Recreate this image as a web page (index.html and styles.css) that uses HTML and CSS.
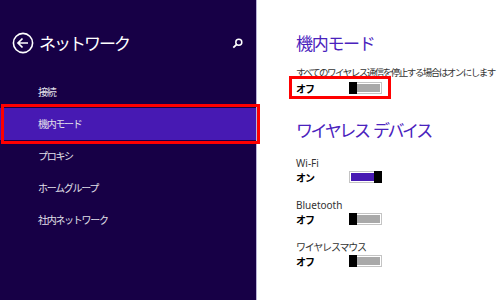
FILE: index.html
```html
<!DOCTYPE html>
<html lang="ja">
  <head>
    <meta charset="UTF-8" />
    <meta name="viewport" content="width=device-width, initial-scale=1.0" />
    <title>ネットワーク</title>
    <link rel="stylesheet" href="styles.css">
  </head>
  <body>
    <div class="screen">
      <aside class="nav">
        <header class="nav-head">
          <svg class="back" width="22" height="22" viewBox="0 0 22 22">
            <circle cx="11" cy="11" r="9.6" fill="none" stroke="#fff" stroke-width="1.6" />
            <path d="M6 11h10M10.5 6.5L6 11l4.5 4.5" fill="none" stroke="#fff" stroke-width="1.7" />
          </svg>
          <h1>ネットワーク</h1>
          <svg class="search" width="11" height="11" viewBox="0 0 11 11">
            <circle cx="6.8" cy="4.2" r="3" fill="none" stroke="#fff" stroke-width="1.5" />
            <path d="M4.7 6.3L1.3 9.7" stroke="#fff" stroke-width="1.8" />
          </svg>
        </header>

        <ul class="menu">
          <li>接続</li>
          <li class="active">機内モード</li>
          <li>プロキシ</li>
          <li>ホームグループ</li>
          <li>社内ネットワーク</li>
        </ul>
      </aside>

      <main class="content">
        <h2>機内モード</h2>
        <p class="desc">すべてのワイヤレス通信を停止する場合はオンにします</p>
        <div class="setting marked">
          <span class="state">オフ</span>
          <span class="toggle"><span class="fill"></span><span class="thumb"></span></span>
        </div>

        <h2 class="devices">ワイヤレス デバイス</h2>

        <div class="device">
          <p class="label">Wi-Fi</p>
          <div class="setting">
            <span class="state">オン</span>
            <span class="toggle on"><span class="fill"></span><span class="thumb"></span></span>
          </div>
        </div>

        <div class="device">
          <p class="label">Bluetooth</p>
          <div class="setting">
            <span class="state">オフ</span>
            <span class="toggle"><span class="fill"></span><span class="thumb"></span></span>
          </div>
        </div>

        <div class="device">
          <p class="label kana">ワイヤレスマウス</p>
          <div class="setting">
            <span class="state">オフ</span>
            <span class="toggle"><span class="fill"></span><span class="thumb"></span></span>
          </div>
        </div>
      </main>
    </div>
  </body>
</html>
```

FILE: styles.css
```css
html {
  font-family: "Noto Sans CJK JP", "Noto Sans", sans-serif;
  line-height: 1.3;
}

body {
  margin: 0;
  padding: 0;
  background: #fff;
}

.screen {
  display: flex;
  height: 300px;
  overflow: hidden;
}

/* left pane */
.nav {
  width: 256px;
  flex: none;
  background: #170046;
  border-right: 1px solid #b9b2d6;
  padding-top: 31px;
}

.nav-head {
  display: flex;
  align-items: center;
  height: 24px;
  padding-left: 12px;
}

.nav-head h1 {
  margin: 0 0 0 5px;
  font-size: 17px;
  font-weight: 400;
  color: #fff;
  letter-spacing: -2px;
}

.search {
  margin-left: auto;
  margin-right: 13px;
}

.menu {
  list-style: none;
  margin: 21px 0 0;
  padding: 0;
}

.menu li {
  height: 32px;
  line-height: 32px;
  padding-left: 38px;
  font-size: 10px;
  letter-spacing: -1.3px;
  color: #e2e0ea;
  position: relative;
}

.menu li.active {
  background: #4719b3;
}

/* red annotation frame */
.menu li.active::after {
  content: "";
  position: absolute;
  left: 1px;
  right: -4px;
  top: -4px;
  bottom: -4px;
  border: 3px solid #f00;
}

/* right pane */
.content {
  flex: 1;
  padding: 31px 0 0 39px;
  color: #222;
}

.content h2 {
  margin: 0;
  font-size: 17px;
  line-height: 24px;
  font-weight: 400;
  letter-spacing: -1.3px;
  color: #4a22bd;
}

.content h2.devices {
  margin-top: 23px;
  letter-spacing: -2.4px;
  word-spacing: 3px;
}

.desc {
  margin: 11px 0 0;
  font-size: 9.5px;
  line-height: 13px;
  letter-spacing: -1.5px;
  white-space: nowrap;
  color: #333;
}

.setting {
  display: flex;
  align-items: center;
  height: 14px;
  position: relative;
}

.setting.marked {
  margin-top: 2px;
}

.setting.marked::after {
  content: "";
  position: absolute;
  left: -7px;
  top: -5px;
  width: 102px;
  height: 23px;
  box-sizing: border-box;
  border: 3px solid #f00;
}

.state {
  width: 53px;
  font-size: 10px;
  font-weight: 700;
  letter-spacing: -1px;
  color: #000;
}

.toggle {
  position: relative;
  display: flex;
  width: 33px;
  height: 12px;
  box-sizing: border-box;
  border: 1px solid #c4c4c4;
  padding: 1px;
  background: #fff;
}

.toggle .fill {
  flex: 1;
  background: #a9a9a9;
}

.toggle .thumb {
  position: absolute;
  top: -1px;
  bottom: -1px;
  left: -1px;
  width: 8px;
  background: #000;
}

.toggle.on .fill {
  background: #4719b3;
}

.toggle.on .thumb {
  left: auto;
  right: -1px;
}

.device {
  margin-top: 14px;
}

.device:first-of-type {
  margin-top: 8px;
}

.label {
  margin: 0;
  font-family: "Noto Sans", "Noto Sans CJK JP", sans-serif;
  font-size: 10px;
  line-height: 14px;
  height: 14px;
  color: #333;
}

.label.kana {
  font-family: "Noto Sans CJK JP", sans-serif;
  letter-spacing: -1.2px;
}
```
